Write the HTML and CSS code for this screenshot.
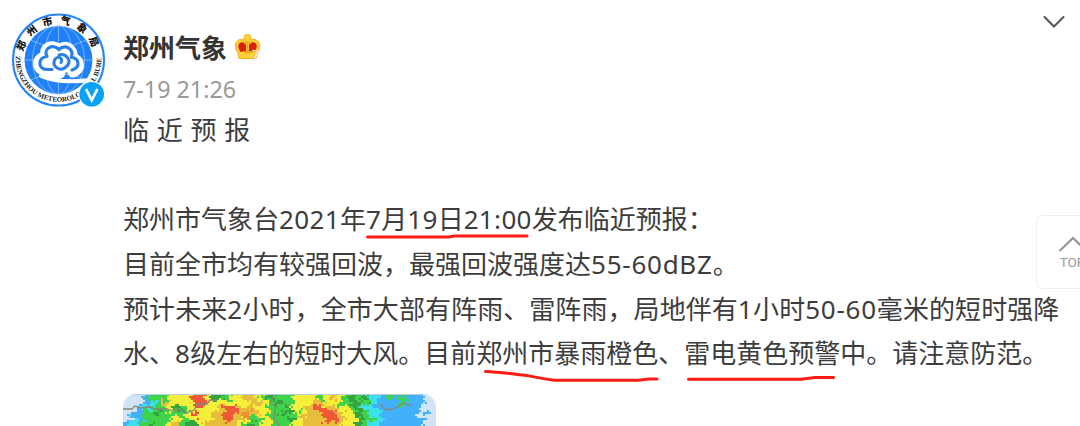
FILE: index.html
```html
<!DOCTYPE html>
<html lang="zh-CN">
<head>
<meta charset="utf-8">
<title>郑州气象</title>
<link rel="stylesheet" href="styles.css">
</head>
<body>
<article class="post">
  <div class="avatar">
    <svg width="96" height="98" viewBox="0 0 96 98">
      <defs>
        <path id="arc-top" d="M11.500 48A36 36 0 0 1 83.500 48"/>
        <path id="arc-bottom" d="M4.800 44A42.800 42.800 0 1 0 90.200 44"/>
        <clipPath id="globe"><circle cx="47.500" cy="48" r="34.500"/></clipPath>
      </defs>
      <circle cx="47.500" cy="48" r="45.500" fill="#fff" stroke="#2584f7" stroke-width="2"/>
      <circle cx="47.500" cy="48" r="34" fill="#1f80f7"/>
      <g clip-path="url(#globe)" fill="none" stroke="#8fc3ff" stroke-width=".8">
        <path d="M47.500 13v70M13 48h70M19 28Q47 42 76 28M19 68Q47 55 76 68"/>
        <ellipse cx="47.500" cy="48" rx="14" ry="34.500"/>
        <ellipse cx="47.500" cy="48" rx="26" ry="34.500"/>
      </g>
      <g fill="none" stroke-linecap="round" stroke-linejoin="round">
        <path d="M62 60C70 57 69 48 61 46C63 37 54 32 48 38C41 31 32 36 35 45C25 45 25 58 35 59C41 60 44 62 49 61" fill="#fff" stroke="#fff" stroke-width="11"/>
        <path d="M30 64Q48 72 80 68" stroke="#fff" stroke-width="4"/>
        <path d="M61 58C70 55 68 46 60.500 45.500C63 36 54 32 48 37.500C41 31 32 37 36 44.500C27 45 26 57 36 57.500H41" stroke="#2b80e6" stroke-width="3.200"/>
        <path d="M50 50.500C53 46 46 43 43.500 48C41 55 49 60 55 55C62 49 55 41 48 43" stroke="#2b80e6" stroke-width="3"/>
      </g>
      <text class="seal-cn"><textPath href="#arc-top" startOffset="8">郑州市气象局</textPath></text>
      <text class="seal-en"><textPath href="#arc-bottom" startOffset="0">ZHENGZHOU METEOROLOGICAL BUREAU</textPath></text>
      <circle cx="80.700" cy="82.300" r="13.300" fill="#fff"/>
      <circle cx="80.700" cy="82.300" r="12.300" fill="#0aa1fb"/>
      <path d="M75 77l5.700 11.200L86.400 77" fill="none" stroke="#fff" stroke-width="2.700"/>
    </svg>
  </div>
  <div class="content">
    <header class="author">
      <span class="name">郑州气象</span>
      <svg class="crown" width="28" height="28" viewBox="0 0 28 28">
        <path d="M5 25.500L4 20Q1 17 1.500 12C2 7 7 5 10.500 7Q9 1.500 13.500 1.500T16.500 7C20 5 25 7 25.500 12Q26 17 23 20L22 25.500z" fill="#ffcf35" stroke="#f2ad1f"/>
        <path d="M6.500 19Q3.500 15 4.500 12C6 8 11 9 12 12V18zM20.500 19Q23.500 15 22.500 12C21 8 16 9 15 12V18z" fill="#d9200f"/>
        <path d="M10 10.500q3.500-2.500 7 0M13.500 10v9M10 19h7" stroke="#f3a51d" stroke-width="1.800" fill="none"/>
        <text class="level" x="18" y="25.500">7</text>
      </svg>
    </header>
    <time class="time">7-19 21:26</time>
    <div class="text">
      <p class="title">临 近 预 报</p>
      <p>&nbsp;</p>
      <p>郑州市气象台<span class="num">2021</span>年<span class="num">7</span>月<span class="num">19</span>日<span class="num">21:00</span>发布临近预报：</p>
      <p>目前全市均有较强回波，最强回波强度达<span class="range">55-60dBZ</span>。</p>
      <p class="wide">预计未来<span class="num">2</span>小时，全市大部有阵雨、雷阵雨，局地伴有<span class="num">1</span>小时<span class="range">50-60</span>毫米的短时强降</p>
      <p>水、<span class="num">8</span>级左右的短时大风。目前郑州市暴雨橙色、雷电黄色预警中。请注意防范。</p>
    </div>
    <canvas class="radar" id="radar" width="313" height="34"></canvas>
  </div>
</article>
<svg class="marks" width="1080" height="426" viewBox="0 0 1080 426">
  <path d="M367.500 237H449L454 236H527M485.500 371.500C500 372 513 374 527 375.500C540 378 545 379 555 380.200H638L649 379H657M688.500 379.200H801L815 377.500H833.500"/>
</svg>
<svg class="more" width="24" height="16" viewBox="0 0 24 16"><path d="M2.500 3L12 12.500 21.500 3"/></svg>
<div class="top">
  <svg width="28" height="18" viewBox="0 0 28 18"><path d="M0.500 16L14 3 27.500 16"/></svg>
  <span>TOP</span>
</div>
<script src="radar.js"></script>
</body>
</html>
```
FILE: styles.css
```css
body {
  margin: 0;
  width: 1080px;
  height: 426px;
  overflow: hidden;
  position: relative;
  background: #fff;
  color: #333;
  font-family: "Noto Sans", "Noto Sans CJK SC", sans-serif;
}
.post {
  display: flex;
  height: 426px;
  overflow: hidden;
  padding-left: 11px;
}
.avatar {
  flex: none;
  width: 112px;
  padding-top: 12px;
}
.avatar svg { display: block; }
.seal-cn {
  font: 900 10px "Noto Sans CJK SC", sans-serif;
  letter-spacing: 6.5px;
  fill: #111;
}
.seal-en {
  font: bold 7px "Liberation Serif", serif;
  fill: #222;
}
.content {
  flex: none;
  width: 957px;
  padding-top: 27px;
}
.author {
  display: flex;
  align-items: center;
  height: 40px;
  gap: 7px;
}
.name {
  font: bold 26px/40px "Noto Sans CJK SC", sans-serif;
}
.crown { margin-top: -1px; }
.level {
  font: bold 13px "Noto Sans", sans-serif;
  fill: #fff;
  stroke: #e8a019;
  stroke-width: .5px;
}
.time {
  display: block;
  height: 41px;
  padding-top: 1px;
  box-sizing: border-box;
  font-size: 23.3px;
  line-height: 42px;
  color: #999;
}
.text {
  height: 285.5px;
  color: #3d3d3d;
  font-size: 26px;
  line-height: 44.7px;
}
.text p {
  margin: 0;
  height: 44.7px;
  white-space: nowrap;
}
.text .title { word-spacing: 1px; }
.text .wide { letter-spacing: .07px; }
.num { letter-spacing: .35px; }
.range { letter-spacing: .75px; }
.radar {
  display: block;
  border-radius: 13px 13px 0 0;
}
.marks {
  position: absolute;
  left: 0;
  top: 0;
}
.marks path {
  fill: none;
  stroke: #fb1d14;
  stroke-width: 3;
  stroke-linecap: round;
  stroke-linejoin: round;
}
.more {
  position: absolute;
  right: 14px;
  top: 14px;
}
.more path {
  fill: none;
  stroke: #555;
  stroke-width: 2.1;
  stroke-linecap: round;
}
.top {
  position: absolute;
  left: 1035.500px;
  top: 215px;
  box-sizing: border-box;
  width: 74px;
  height: 74px;
  padding-top: 19px;
  border: 1.5px solid #eee;
  border-radius: 7px;
  background: #fff;
  display: flex;
  flex-direction: column;
  align-items: center;
  color: #999;
  font: 13.5px/18px Roboto, sans-serif;
}
.top path {
  fill: none;
  stroke: #929292;
  stroke-width: 2;
}
```
FILE: radar.js
```js
// Echo intensity, one letter per coarse cell; edges are roughened when drawn.
const rows = [
  "pppbgggyyyyrryddgyyooygdg" + "ggyyyygyoygdgdccbgbgbbbpp",
  "pppbcgoyyyyrryyyyyyyooygd" + "ggyyyooyyggddgcbbbbgbbbpp",
  "ppbcgggydgyyyyyorroooyygg" + "gdyyorrooyygdccbbbbbbbppp",
  "pbbggdggggyryyoorronooygg" + "dggyooorroyydgccbbbbbbpbp",
  "pcbggggyygyyyyoorooyggygg" + "gdyoooorroyydggcbbbbbbbpp",
  "bccgdggyogddyoooooygdgyyg" + "ggyyooooooyydgccbbbbbbbpp"
];
const colors = {
  p: "#d3e3f6", b: "#43b0fb", c: "#3ce1ec", g: "#3fd24b", d: "#35a440",
  y: "#f5ef3c", o: "#e8bd3b", n: "#f09035", r: "#f0583a"
};
const ctx = document.getElementById("radar").getContext("2d");
let seed = 17;
function rand() {
  seed = (seed * 16807) % 2147483647;
  return seed / 2147483647;
}
for (let y = 0; y < 34; y += 2) {
  for (let x = 0; x < 313; x += 2) {
    const cx = Math.floor((x + Math.sin(y * 0.7) * 2 + (rand() - 0.5) * 5) / 6.26);
    const cy = Math.floor((y + Math.sin(x * 0.4) * 1.5 + (rand() - 0.5) * 3) / 5.4);
    const row = rows[Math.max(0, Math.min(5, cy))];
    ctx.fillStyle = colors[row[Math.max(0, Math.min(49, cx))]];
    ctx.fillRect(x, y, 2, 2);
  }
}
ctx.strokeStyle = "#87877a";
ctx.lineWidth = 1.3;
ctx.stroke(new Path2D("M0 15h9l3-3 6 2 8-1 7 2h10l7 2 5-2 8 4 8-3 3-6h10l3-4h7M151 0l-3 8 5 5-2 11 5 8M257 10l6 6 10-2 8-5 8 3"));
ctx.fillStyle = "#bccbd8";
ctx.fillRect(0, 0, 313, 1);
```
